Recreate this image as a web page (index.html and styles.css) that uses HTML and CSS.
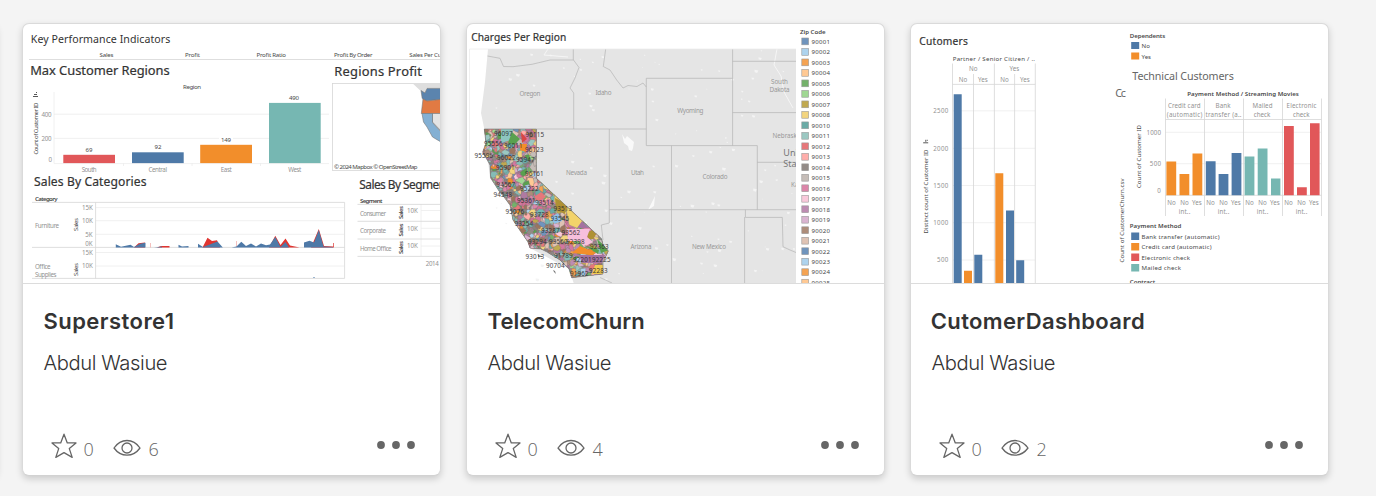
FILE: index.html
```html
<!DOCTYPE html>
<html lang="en">
<head>
<meta charset="utf-8">
<title>Workbooks</title>
<link rel="stylesheet" href="styles.css">
</head>
<body>
<svg class="defs" width="0" height="0">
  <symbol id="star" viewBox="0 0 26 26"><path d="M13 1.2 L16.3 9.9 H25 L18.3 15.6 L21.2 24.4 L13 19.6 L4.8 24.4 L7.7 15.6 L1 9.9 H9.7 Z"/></symbol>
  <symbol id="eye" viewBox="0 0 28 18"><path d="M1 9 C8 -1 20 -1 27 9 C20 18.6 8 18.6 1 9 Z"/><circle cx="14" cy="9" r="5"/></symbol>
  <symbol id="dots" viewBox="0 0 38 8"><circle cx="4" cy="4" r="3.9"/><circle cx="19" cy="4" r="3.9"/><circle cx="34" cy="4" r="3.9"/></symbol>
</svg>
<main class="cards">
  <article class="card" aria-hidden="true"></article>

  <article class="card">
    <svg class="thumb" viewBox="23 24 417 259">
      <path class="faint" d="M54 92V163.5M54 114.2H329M54 138.4H329M54 163.6H329M123.5 163V166M192 163V166M260.5 163V166M96 207.6H344M96 220.7H344M96 234.3H344M96 252.5H344M96 266H344M421 204V256M421 210.5H440M421 228.3H440M421 246H440"/>
      <rect x="219" y="136" width="14" height="7" fill="#fff"/>
      <g class="dark">
        <text x="30.8" y="43.2" font-size="10.6" textLength="139.5">Key Performance Indicators</text>
        <text class="strong" x="30.2" y="75" font-size="12.9" textLength="139.5">Max Customer Regions</text>
        <text class="strong" x="334.3" y="75.7" font-size="12.9" textLength="87.5">Regions Profit</text>
        <text class="strong" x="34" y="186" font-size="12.1" textLength="112.5">Sales By Categories</text>
        <text class="strong" x="359.3" y="188.6" font-size="11.9" textLength="90.5">Sales By Segment</text>
      </g>
      <g class="label">
        <text x="99.5" y="57" textLength="14">Sales</text><text x="185" y="57" textLength="15">Profit</text>
        <text x="256.5" y="57" textLength="29.5">Profit Ratio</text><text x="334" y="57" textLength="38.5">Profit By Order</text>
        <text x="409.3" y="57" textLength="51">Sales Per Customer</text>
        <text x="183" y="89" textLength="18">Region</text>
        <text transform="translate(37.5 154.5) rotate(-90)" textLength="52">Count of Customer ID</text>
        <text x="35" y="201" font-weight="600" textLength="22.5">Category</text>
        <text x="360" y="202.6" font-weight="600" textLength="22.5">Segment</text>
        <text transform="translate(77.7 231) rotate(-90)" textLength="13">Sales</text>
        <text transform="translate(77.7 276) rotate(-90)" textLength="13">Sales</text>
        <g font-weight="600"><text transform="translate(403 219) rotate(-90)" textLength="13">Sales</text>
        <text transform="translate(403 236.5) rotate(-90)" textLength="13">Sales</text>
        <text transform="translate(403 254) rotate(-90)" textLength="13">Sales</text></g>
        <text x="85.5" y="152">69</text><text x="154.5" y="149">92</text><text x="221" y="142" textLength="10">149</text><text x="289" y="100" textLength="10">490</text>
      </g>
      <path class="mark" d="M33 96.5h5M34 94.5h3M36 92.5h1"/>
      <path class="line" d="M29 59.5H440M32 202.4H344.6V278.4H32M32 247.4H344.6M95.6 202.4V278.4M357.5 204.4H440M357.5 221.3H440M357.5 239H440M357.5 256.4H440"/>
      <rect x="63.3" y="154.8" width="51.7" height="8.3" fill="#e15759"/>
      <rect x="132" y="152.3" width="51.7" height="10.8" fill="#4e79a7"/>
      <rect x="200.2" y="144.8" width="51.8" height="18.3" fill="#f28e2b"/>
      <rect x="269" y="102.9" width="51.7" height="60.2" fill="#76b7b2"/>
      <g class="gray">
        <text x="41.5" y="116.5" textLength="10">400</text><text x="41.5" y="140.7" textLength="10">200</text><text x="48.5" y="161.5">0</text>
        <text x="81.7" y="171.7" textLength="15">South</text><text x="148.5" y="171.7" textLength="18.5">Central</text><text x="220.7" y="171.7" textLength="11">East</text><text x="288.2" y="171.7" textLength="13">West</text>
        <text x="35" y="228" textLength="24">Furniture</text><text x="35" y="269" textLength="15.5">Office</text><text x="35" y="277" textLength="21.5">Supplies</text>
        <text x="82" y="209.8">15K</text><text x="82" y="223.2">10K</text><text x="85.2" y="236.8">5K</text><text x="85.2" y="246.2">0K</text><text x="82" y="254.8">15K</text><text x="82" y="268.4">10K</text>
        <text x="360" y="215.5" textLength="26">Consumer</text><text x="360" y="233.2" textLength="26">Corporate</text><text x="360" y="250.5" textLength="31.5">Home Office</text>
        <text x="407" y="213.2">10K</text><text x="407" y="230.8">10K</text><text x="407" y="248">10K</text><text x="425.8" y="266.2" textLength="13">2014</text>
      </g>
      <g fill="#e03531">
        <path d="M134 247.5L138.5 243.3L145 242.5V247.5ZM157 247.5L161 246H169.5V247.5ZM202.5 247.5L207.5 237.7L212 241L217 240.3L220 247.5ZM269 247.5L275.3 235.8L280.5 245L285.5 238.6L290 245.5L299.5 247.5ZM311 247.5L318.8 229L324 246L333.2 246.5V243h.7V247.5Z"/>
        <path fill="#efa5a3" d="M236.2 241h.7v6h-.7ZM150.2 243h.7v4.5h-.7Z"/>
      </g>
      <path fill="#4e79a7" d="M115.8 247.6V244.3L121 246.8L130.5 244.8L134 247L140 243.8L145.5 242.8V247.6ZM154 247.6L162 246.6V247.6ZM178.5 247.6V244.8L182 246.6L188.5 246V247.6ZM198 247.6V243.8L203 247L211 244L217.5 241.5L222.8 247.6ZM231.5 247.6L236.5 246.5L241.3 241.8L246 246L251 243.5L256 246.4L261 243.6L266 245.3L270 244.5L275.3 237L280.5 247L285.5 242L289 247.6ZM304 247.6V242.5L309.5 240.8L314 242.5L318.8 230L323.5 246.5L333 247V247.6Z"/>
      <path fill="#9db6d0" d="M313 277h2v1h-2Z"/>
      <rect class="line" x="332.4" y="83.4" width="115" height="87"/>
      <path fill="#dedede" d="M413 83.8L426 96V88.4H440V83.8Z"/>
      <g stroke="#777" stroke-width=".6">
        <path fill="#5b84ae" d="M421 90.5L425 93L427 88.4H441V99.3L426 100.8L422.2 98.5Z"/>
        <path fill="#e17a43" d="M423 99L427 101L441 99.3V113.5H421.3Z"/>
        <path fill="#e4e4e4" d="M432.5 113.5H441V131L432.5 122Z"/>
        <path fill="#84b0d3" d="M422 113.5H432.5V122.5L441 132V142L432.5 137L427 127L423.5 122Z"/>
      </g>
      <text class="label" x="334" y="168.5" textLength="83.5">© 2024 Mapbox  © OpenStreetMap</text>
    </svg>
    <div class="info"><h2 class="title t1">Superstore1</h2><p class="author">Abdul Wasiue</p>
      <div class="stats"><svg class="star"><use href="#star"/></svg><span class="num">0</span><svg class="eye"><use href="#eye"/></svg><span class="num low">6</span><svg class="dots"><use href="#dots"/></svg></div></div>
  </article>

  <article class="card">
    <svg class="thumb" viewBox="467 24 417 259">
      <defs>
        <clipPath id="mapclip"><rect x="469" y="49" width="327" height="235"/></clipPath>
        <clipPath id="ca"><path d="M484.3 129H536.3V178.3L601.7 239L603 245L608.3 251L603 262V274L571.7 277.7L569 269L560 260L547 252L541 249L530 248L528 242L519 229L513 220L510 205L504 197L499 191L490.7 178L490 165L482.7 152L486 143Z"/></clipPath>
      </defs>
      <text class="dark strong" x="471.3" y="41.3" font-size="10.2" textLength="95">Charges Per Region</text>
      <g clip-path="url(#mapclip)">
        <path fill="#e5e5e5" d="M488 49H797V284H574L569 269L530 248L510 205L490 178L484.3 129L481 113L485 82Z"/>
        <g id="terrain" fill="#f4f4f4"></g>
        <path fill="#f9f9f9" d="M622 134L625 139L627 136L634 142L633 148L632 151L629 150L628 146L624 143ZM655 196L648 210L654 206Z"/>
        <path class="river" d="M548 49L544 55L568 57M777 49L774 65L781 76L784 92L793 108"/>
        <path class="state" d="M487.5 56L500 58.3L503.5 66.5L513 66.7L532 64.3L550 60H573.5L579 67.5L575 78L570 88L573.7 93V129M573.3 49V60M536.3 129H646.3M605.7 49L603.3 66.5L610 70L616.7 80L623 88L628 85.5L637 86.5L643 83L646.3 87M646.3 78.3H732.6M646.3 78.3V145.6H757.3V209.7M732.6 49V145.6M732.6 61.3H796M732.6 112.6H796M757.3 162.3H796M671.5 145.6V283M609.3 129V223L601.3 225L603 240M536.3 129V178L601.7 239M609.3 209.7H796M745.4 209.7V217.4H782.3L783 246.7L790 250L796 252.5M744.6 217V283M600 277.5L612 283"/>
        <g clip-path="url(#ca)"><rect x="480" y="128" width="132" height="152" fill="#8a817f"/><g id="zips"></g>
          <path fill="#8dc6c0" d="M501 129L513 129L511 140L501 143Z"/><path fill="#59a14f" d="M512 132L520 139L514 145L508 143Z"/>
          <path fill="#d94545" d="M521 132L527 139L522 143Z"/><path fill="#edc948" d="M570 213L576 228L584 219L577 202L565 194L553 185V195L563 203Z" opacity=".9"/>
          <path fill="#f3d36b" d="M555 188L584 220L579 229L569 225L566 209L554 202Z" stroke="#888" stroke-width=".5"/><path fill="#b09235" d="M555 198L567 204L565 214L556 210ZM587 233L592 230L597 233L593 239H588Z"/>
          <path fill="#f7bfdc" d="M567 229H590L587 237L593 242L584 247L579 241L568 241Z"/><path fill="#a573a0" d="M579 255H605L602 263L582 263ZM582 221L589 228H577Z"/>
          <path fill="#f28e2b" d="M580 246L596 253L590 255L572 253ZM520 144H527L526 152L520 150Z"/><path fill="#59a14f" d="M597 239L609 250L601 253ZM584 245L599 250L598 254Z"/>
          <path fill="#f0cb51" d="M595 265H604V274H592Z"/><path fill="#e7777a" d="M534 197L541 192L546 197L539 201Z"/><path fill="#8ec0e8" d="M551 217L558 213L562 221L554 224Z"/>
        </g>
        <path class="caedge" d="M484.3 129H536.3V178.3L601.7 239L603 245L608.3 251L603 262V274L571.7 277.7L569 269L560 260L547 252L541 249L530 248L528 242L519 229L513 220L510 205L504 197L499 191L490.7 178L490 165L482.7 152L486 143Z"/>
        <path fill="#777" d="M538 255l4 1v1h-4ZM553 270l2 1l1 3l-2-2Z"/>
        <g id="zipnames" class="zipname"></g>
        <g class="place">
          <text x="519.5" y="96.2" textLength="21">Oregon</text><text x="595.5" y="95" textLength="16">Idaho</text><text x="677.3" y="113" textLength="26">Wyoming</text>
          <text x="771" y="84.3" textLength="17">South</text><text x="769.5" y="91.5" textLength="20">Dakota</text><text x="772.5" y="138.3" textLength="28">Nebraska</text>
          <text x="566" y="175" textLength="21">Nevada</text><text x="631" y="175" textLength="13">Utah</text><text x="702.5" y="179" textLength="25">Colorado</text><text x="791" y="187">Kansas</text>
          <text x="630.5" y="248.5" textLength="21">Arizona</text><text x="692" y="248.5" textLength="34">New Mexico</text>
          <g font-size="9" fill="#777"><text x="783.3" y="156">United</text><text x="783.3" y="166.7">States</text></g>
        </g>
      </g>
      <path class="faint" d="M469.5 283V49H796"/>
      <text class="label" x="800" y="33.5" font-weight="600" textLength="25.5">Zip Code</text>
      <g id="legend" class="label"></g>
    </svg>
    <div class="info"><h2 class="title t2">TelecomChurn</h2><p class="author">Abdul Wasiue</p>
      <div class="stats"><svg class="star"><use href="#star"/></svg><span class="num">0</span><svg class="eye"><use href="#eye"/></svg><span class="num low">4</span><svg class="dots"><use href="#dots"/></svg></div></div>
  </article>

  <article class="card">
    <svg class="thumb" viewBox="911 24 417 259">
      <text class="dark strong" x="919.3" y="45" font-size="10.2" textLength="48.5">Cutomers</text>
      <path class="faint" d="M953 110.8H1035M953 148.3H1035M953 185.5H1035M953 222.7H1035M953 260H1035M1165 132.3H1321M1165 163.7H1321"/>
      <g class="label">
        <text x="952.7" y="60.7" textLength="82.3">Partner / Senior Citizen / ..</text>
        <text transform="translate(928 233.5) rotate(-90)" textLength="84">Distinct count of Customer ID</text>
        <text x="1129.8" y="38" font-weight="600" textLength="35.5">Dependents</text><text x="1141.5" y="48">No</text><text x="1141.5" y="58.6">Yes</text>
        <text x="1187.3" y="96" font-weight="600" textLength="111.5">Payment Method / Streaming Movies</text>
        <text transform="translate(1140.7 188) rotate(-90)" textLength="63">Count of Customer ID</text>
        <text transform="translate(1124 262.5) rotate(-90)" textLength="84">Count of CustomerChurn.csv</text>
        <text x="1129.8" y="228.2" font-weight="600" textLength="51.5">Payment Method</text>
        <text x="1141.5" y="238.6" textLength="78">Bank transfer (automatic)</text><text x="1141.5" y="249.1" textLength="70">Credit card (automatic)</text><text x="1141.5" y="259.6" textLength="48.5">Electronic check</text><text x="1141.5" y="270" textLength="39.5">Mailed check</text>
        <text x="1129.8" y="284.3" font-weight="600" textLength="25.5">Contract</text>
      </g>
      <path class="mark" d="M923.2 142.8h5M925.8 139.8v2M927.3 139.8v1"/>
      <path class="line" d="M952.5 63.5V283M994.4 63.5V283M1035.3 63.5V283M973.5 74V283M1014.6 74V283M952.5 84.4H1035.3M1165.5 98.5V216M1204.5 98.5V216M1243.5 98.5V216M1282.5 98.5V216M1321.5 98.5V216M1165.5 119.5H1321.5M1165.5 195.3H1321.5"/>
      <g class="gray">
        <text x="969" y="71.2">No</text><text x="1009.5" y="71.2">Yes</text><text x="958.7" y="81.7">No</text><text x="978" y="81.7">Yes</text><text x="1000.2" y="81.7">No</text><text x="1020" y="81.7">Yes</text>
        <text x="933.3" y="113.2" textLength="15">2500</text><text x="933.3" y="150.5" textLength="15">2000</text><text x="933.3" y="187.8" textLength="15">1500</text><text x="933.3" y="225" textLength="15">1000</text><text x="937" y="262.3" textLength="11.3">500</text>
        <text x="1168" y="108.2" textLength="32.5">Credit card</text><text x="1166.8" y="117.4" textLength="35.5">(automatic)</text>
        <text x="1215.5" y="108.2" textLength="15">Bank</text><text x="1205.5" y="117.4" textLength="36">transfer (a..</text>
        <text x="1252.5" y="108.2" textLength="20">Mailed</text><text x="1253.8" y="117.4" textLength="16.5">check</text>
        <text x="1286.5" y="108.2" textLength="30">Electronic</text><text x="1293" y="117.4" textLength="16.5">check</text>
        <text x="1146.5" y="134.5" textLength="14.5">1000</text><text x="1149.8" y="166.2" textLength="11.3">500</text><text x="1157.3" y="192.8">0</text>
      </g>
      <g id="months" class="gray"></g>
      <g fill="#4e79a7"><path d="M953.7 94.2h8V283h-8ZM974.3 254.8h8V283h-8ZM1006 210.4h8V283h-8ZM1016.2 260.2h8V283h-8Z"/><path d="M1205.8 161.2h9.8v34h-9.8ZM1218.6 174.1h9.8v21.1h-9.8ZM1231.6 153h9.8v42.2h-9.8Z"/><path d="M1131.2 42h8v7h-8ZM1131.2 232.5h8v7.6h-8Z"/></g>
      <g fill="#f28e2b"><path d="M964 270.8h8V283h-8ZM995.3 173.3h8V283h-8Z"/><path d="M1166.4 161.6h9.8v33.6h-9.8ZM1179.5 174.1h9.8v21.1h-9.8ZM1192.5 153.6h9.8v41.6h-9.8Z"/><path d="M1131.2 52.6h8v7h-8ZM1131.2 243h8v7.6h-8Z"/></g>
      <g fill="#76b7b2"><path d="M1244.6 156.6h9.8v38.6h-9.8ZM1257.7 148.6h9.8v46.6h-9.8ZM1271 178.5h9.4v16.7H1271ZM1131.2 264h8v7.4h-8Z"/></g>
      <g fill="#e15759"><path d="M1284 126h9.8v69.2h-9.8ZM1297 187.3h9.8v7.9H1297ZM1310 123.3h9.6v71.9H1310ZM1131.2 253.5h8v7.6h-8Z"/></g>
      <g fill="#666"><text x="1132.3" y="80.3" font-size="10.7" textLength="101.5">Technical Customers</text><text x="1115.3" y="96.8" font-size="10.7" textLength="10.5">Cc</text></g>
    </svg>
    <div class="info"><h2 class="title t3">CutomerDashboard</h2><p class="author">Abdul Wasiue</p>
      <div class="stats"><svg class="star"><use href="#star"/></svg><span class="num">0</span><svg class="eye"><use href="#eye"/></svg><span class="num low">2</span><svg class="dots"><use href="#dots"/></svg></div></div>
  </article>
</main>
<script src="charts.js"></script>
</body>
</html>
```
FILE: styles.css
```css
* { box-sizing: border-box; }
body { margin: 0; height: 496px; overflow: hidden; background: #f4f4f4; font-family: "Noto Sans", "Open Sans", sans-serif; }
.defs { display: block; height: 0; }
.cards { display: flex; gap: 25px; padding-top: 23px; margin-left: -422px; width: 1800px; }
.card { flex: none; width: 419px; height: 453px; border: 1px solid #dadada; border-bottom-color: #d2d2d2; border-radius: 7px; background: #fff; box-shadow: 0 3px 7px rgba(0, 0, 0, .17); overflow: hidden; }
.thumb { display: block; width: 417px; height: 259px; font-family: "Noto Sans", "Open Sans", sans-serif; }
.dark { fill: #333; }
.strong { stroke: #333; stroke-width: .2; }
.label { fill: #484848; font-size: 6.1px; }
.gray { fill: #929292; font-size: 6.2px; }
.line { fill: none; stroke: #d6d6d6; stroke-width: .8; }
.faint { fill: none; stroke: #ececec; stroke-width: .8; }
.mark { fill: none; stroke: #444; stroke-width: .9; }
.state { fill: none; stroke: #b4b4b4; stroke-width: .7; }
.river { fill: none; stroke: #f5f5f5; stroke-width: 1; }
.caedge { fill: none; stroke: #777; stroke-width: .6; }
.place { fill: #999; font-size: 6.3px; }
.zipname { fill: #2b2b2b; font-size: 6.3px; opacity: .9; }
.info { height: 192px; border-top: 1px solid #dcdcdc; padding: 22px 20.5px 0; }
.title { margin: 0; height: 30px; line-height: 30px; font-family: Inter, "Open Sans", sans-serif; font-size: 22px; font-weight: 600; color: #333; white-space: nowrap; }
.t1 { letter-spacing: .45px; }
.t2 { letter-spacing: .1px; }
.t3 { letter-spacing: .35px; margin-left: -.7px; }
.author { margin: 12px 0 0; height: 30px; line-height: 30px; font-family: Inter, "Open Sans", sans-serif; font-size: 20.2px; letter-spacing: -.4px; font-weight: 300; color: #333; white-space: nowrap; }
.stats { display: flex; align-items: center; height: 32px; margin-top: 52px; padding-left: 7px; color: #666; }
.stats svg { flex: none; fill: none; stroke: #666; stroke-width: 1.3; stroke-linejoin: round; }
.stats .star { width: 26px; height: 26px; }
.stats .eye { width: 28px; height: 18px; margin-top: 3px; }
.stats .dots { width: 38px; height: 8px; margin-left: auto; margin-right: 4.5px; margin-bottom: 3px; fill: #666; stroke: none; }
.num { width: 30px; margin-left: 7px; margin-right: -1px; padding-top: 5px; font-family: "Open Sans", "Noto Sans", sans-serif; font-size: 18px; line-height: 24px; font-weight: 300; }
.num.low { padding-top: 6px; margin-left: 8px; }
```
FILE: charts.js
```js
const NS = "http://www.w3.org/2000/svg";
function add(id, tag, attrs, text) {
  const el = document.createElementNS(NS, tag);
  for (const k in attrs) el.setAttribute(k, attrs[k]);
  if (text) el.textContent = text;
  document.getElementById(id).appendChild(el);
}
let seed = 17;
function rnd() { seed = (seed * 16807) % 2147483647; return seed / 2147483647; }

const palette = ["#6f94bd", "#add3ee", "#f5a352", "#ffc994", "#74b26b", "#a0d893", "#c0a950", "#f3d57f", "#6aaba6", "#9bc8c2",
  "#e7777a", "#ffaeab", "#938b87", "#c6bdb8", "#dc85a9", "#f9c9db", "#bd8cb2", "#dab4d1", "#ae8d7a", "#dfc3b4"];

// Zip code legend
const codes = [1, 2, 3, 4, 5, 6, 7, 8, 10, 11, 12, 13, 14, 15, 16, 17, 18, 19, 20, 21, 22, 23, 24, 25];
codes.forEach((c, i) => {
  const y = 41.4 + i * 10.49;
  add("legend", "rect", { x: 801.8, y: y - 3.4, width: 6.8, height: 6.8, fill: palette[i % 20], stroke: "#999", "stroke-width": .6 });
  add("legend", "text", { x: 811.5, y: y + 2.3, textLength: 18.5 }, String(90000 + c));
});

// Zip code areas: irregular patches, smaller and sparser towards the coast
const vivid = ["#d4779f", "#b07aa1", "#76b7b2", "#59a14f", "#f28e2b", "#86bcb6", "#9d7660", "#d37295"];
for (let i = 0; i < 3000; i++) {
  const x = 480 + rnd() * 132, y = 127 + rnd() * 153;
  const coast = 484 + Math.max(0, y - 150) * .62;
  const inland = Math.min(1, Math.max(0, (x - coast) / 35));
  if (rnd() > .7 + inland * .3) continue;
  const size = 1.3 + inland * 1.3 + rnd() * 2, n = 6, p = [];
  for (let k = 0; k < n; k++) {
    const a = k / n * Math.PI * 2, r = size * (.55 + rnd() * .9);
    p.push((x + Math.cos(a) * r).toFixed(1) + "," + (y + Math.sin(a) * r).toFixed(1));
  }
  const set = rnd() < .4 ? vivid : palette;
  add("zips", "polygon", { points: p.join(" "), fill: set[Math.floor(rnd() * set.length)], stroke: "#7d7573", "stroke-width": .35 });
}
[["96097", 494, 136], ["96115", 525.5, 137.3], ["95556", 484, 145.7], ["96011", 504, 148], ["96123", 525, 152], ["95595", 474.5, 158], ["96022", 497, 159.5], ["95947", 516, 162], ["95901", 496, 170], ["96161", 525, 176], ["94567", 496.5, 187], ["95222", 520, 191], ["94548", 493.5, 197], ["95361", 517, 203], ["93514", 535, 204.5], ["93513", 553.5, 211], ["95076", 505.5, 213.5], ["93728", 530, 217], ["93545", 550.5, 221], ["93254", 514.5, 226], ["93562", 561.5, 235], ["93287", 541, 232.5], ["93294", 528, 244], ["93560", 549, 244], ["92398", 566, 244], ["92363", 590, 249], ["93013", 525.5, 259], ["91789", 554, 258], ["92201", 573, 262], ["92225", 592, 262], ["90704", 546, 268], ["91962", 570, 275.5], ["92283", 589, 273]]
  .forEach(([t, x, y]) => add("zipnames", "text", { x, y, textLength: 18.5 }, t));

// Snow and lakes scattered over the base map
for (let i = 0; i < 130; i++) {
  const x = 495 + rnd() * 300, y = 50 + rnd() * 230, s = .5 + rnd() * 2;
  add("terrain", "path", { d: `M${x} ${y}l${s * 1.6} ${s * .3}l${-s * .5} ${s}l${-s} ${-s * .3}Z` });
}

// Axis labels under the payment chart
for (let i = 0; i < 4; i++) {
  const x = 1167.3 + i * 39;
  add("months", "text", { x, y: 204.7 }, "No");
  add("months", "text", { x: x + 13, y: 204.7 }, "No");
  add("months", "text", { x: x + 24.7, y: 204.7 }, "Yes");
  add("months", "text", { x: x + 11.5, y: 214, textLength: 11.5 }, "int..");
}
```
